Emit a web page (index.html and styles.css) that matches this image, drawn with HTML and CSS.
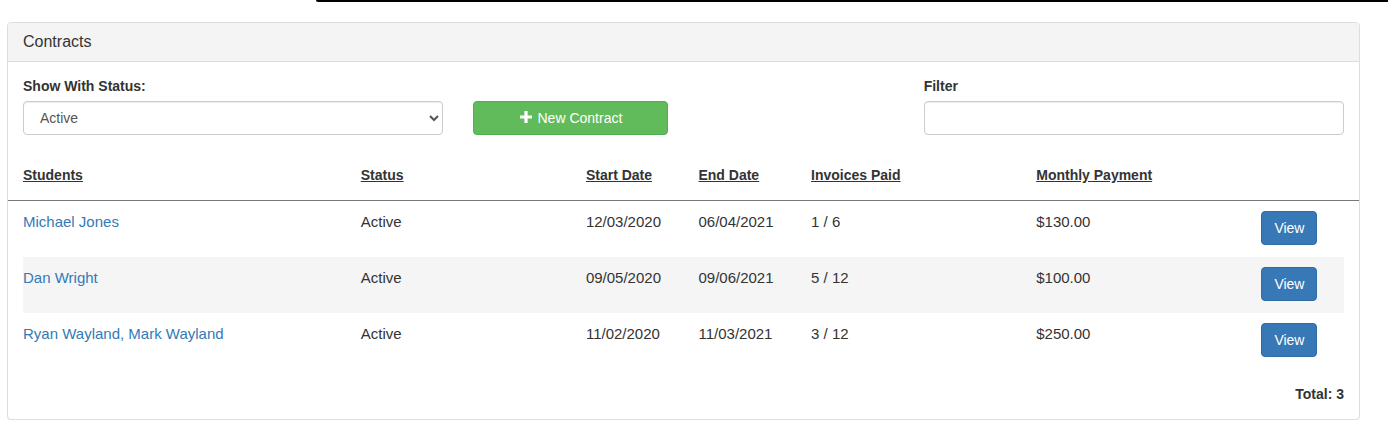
FILE: index.html
```html
<!DOCTYPE html>
<html lang="en">
<head>
<meta charset="utf-8">
<title>Contracts</title>
<link rel="stylesheet" href="styles.css">
</head>
<body>
<div class="topbar"></div>
<div class="page">
  <div class="panel">
    <div class="panel-heading">Contracts</div>
    <div class="panel-body">
      <div class="row">
        <div class="col col-4">
          <label class="label" for="status">Show With Status:</label>
          <select id="status" class="form-control">
            <option>Active</option>
            <option>Inactive</option>
            <option>All</option>
          </select>
        </div>
        <div class="col col-2 col-btn">
          <button class="btn btn-success" type="button">
            <svg class="plus" width="12" height="12" viewBox="0 0 12 12" aria-hidden="true"><path d="M4.4 0h3.2v4.4H12v3.2H7.6V12H4.4V7.6H0V4.4h4.4z" fill="#fff"/></svg>
            New Contract
          </button>
        </div>
        <div class="col col-2"></div>
        <div class="col col-4">
          <label class="label" for="filter">Filter</label>
          <input id="filter" class="form-control" type="text">
        </div>
      </div>

      <div class="table">
        <div class="thead">
          <div class="grid">
            <div class="th">Students</div>
            <div class="th">Status</div>
            <div class="th">Start Date</div>
            <div class="th">End Date</div>
            <div class="th">Invoices Paid</div>
            <div class="th">Monthly Payment</div>
            <div class="th"></div>
          </div>
        </div>
        <div class="grid tr">
          <div class="td"><a href="#">Michael Jones</a></div>
          <div class="td">Active</div>
          <div class="td">12/03/2020</div>
          <div class="td">06/04/2021</div>
          <div class="td">1 / 6</div>
          <div class="td">$130.00</div>
          <div class="td"><button class="btn btn-primary" type="button">View</button></div>
        </div>
        <div class="grid tr striped">
          <div class="td"><a href="#">Dan Wright</a></div>
          <div class="td">Active</div>
          <div class="td">09/05/2020</div>
          <div class="td">09/06/2021</div>
          <div class="td">5 / 12</div>
          <div class="td">$100.00</div>
          <div class="td"><button class="btn btn-primary" type="button">View</button></div>
        </div>
        <div class="grid tr">
          <div class="td"><a href="#">Ryan Wayland, Mark Wayland</a></div>
          <div class="td">Active</div>
          <div class="td">11/02/2020</div>
          <div class="td">11/03/2021</div>
          <div class="td">3 / 12</div>
          <div class="td">$250.00</div>
          <div class="td"><button class="btn btn-primary" type="button">View</button></div>
        </div>
      </div>

      <div class="total">Total: 3</div>
    </div>
  </div>
</div>
</body>
</html>
```

FILE: styles.css
```css
* { box-sizing: border-box; }

html, body {
  margin: 0;
  padding: 0;
  background: #fff;
}

body {
  font-family: "Liberation Sans", Arial, Helvetica, sans-serif;
  font-size: 14px;
  line-height: 20px;
  color: #333;
}

.topbar {
  height: 2px;
  margin-left: 316px;
  background: #000;
  border-bottom-left-radius: 3px;
}

.page {
  padding: 20px 28px 0 7px;
}

.panel {
  border: 1px solid #ddd;
  border-radius: 4px;
  background: #fff;
  box-shadow: 0 1px 1px rgba(0, 0, 0, 0.05);
}

.panel-heading {
  background: #f4f4f4;
  border-bottom: 1px solid #ddd;
  border-top-left-radius: 3px;
  border-top-right-radius: 3px;
  padding: 10px 15px;
  font-size: 16px;
  line-height: 17.6px;
  color: #333;
}

.panel-body {
  padding: 14px 15px 15px;
}

.row {
  display: flex;
  margin: 0 -15px;
}

.col {
  padding: 0 15px;
  margin-bottom: 15px;
}

.col-4 { width: 33.3333%; }
.col-2 { width: 16.6667%; }

.col-btn {
  padding-top: 25px;
}

.label {
  display: inline-block;
  font-weight: bold;
  margin-bottom: 5px;
}

.form-control {
  display: block;
  width: 100%;
  height: 34px;
  padding: 6px 12px;
  font-family: inherit;
  font-size: 14px;
  line-height: 20px;
  color: #555;
  background-color: #fff;
  border: 1px solid #ccc;
  border-radius: 4px;
  box-shadow: inset 0 1px 1px rgba(0, 0, 0, 0.075);
}

.btn {
  display: inline-flex;
  align-items: center;
  justify-content: center;
  gap: 6px;
  height: 34px;
  padding: 6px 12px;
  font-family: inherit;
  font-size: 14px;
  line-height: 20px;
  border: 1px solid transparent;
  border-radius: 4px;
  color: #fff;
  cursor: pointer;
}

.btn-success {
  width: 100%;
  background: #62bb5a;
  border-color: #4cae4c;
}

.btn-primary {
  background: #3878b6;
  border-color: #2e6da4;
}

.plus {
  display: block;
  margin-top: -1px;
}

.table {
  --u: calc((100% + 30px) / 12);
}

.grid {
  display: grid;
  grid-template-columns:
    calc(var(--u) * 3)
    calc(var(--u) * 2)
    var(--u)
    var(--u)
    calc(var(--u) * 2)
    calc(var(--u) * 2)
    1fr;
}

.thead {
  margin: 0 -15px;
  padding: 0 15px;
  border-bottom: 1px solid #777;
}

.thead .grid {
  --u: calc((100% + 30px) / 12);
}

.th {
  padding: 15px 0 15px;
  font-weight: bold;
  text-decoration: underline;
  white-space: nowrap;
}

.tr {
  height: 56px;
}

.td {
  padding-top: 11px;
  font-size: 15px;
  white-space: nowrap;
}

.td:last-child {
  padding-top: 10px;
}

.striped {
  background: #f5f5f5;
}

a {
  color: #337ab7;
  text-decoration: none;
}

.total {
  margin-top: 15px;
  text-align: right;
  font-weight: bold;
}
```
